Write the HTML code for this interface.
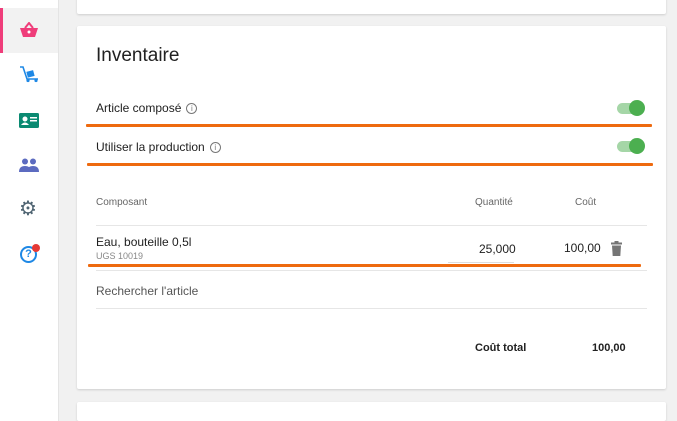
<!DOCTYPE html>
<html style="overflow:hidden;height:421px"><head><style>
body{margin:0;width:677px;height:421px;background:#f1f1f1;font-family:"Liberation Sans",sans-serif;position:relative;overflow:hidden}
.sb{position:absolute;left:0;top:0;width:58px;height:421px;background:#fff;border-right:1px solid #e4e4e4}
.card{position:absolute;left:77px;width:589px;background:#fff;box-shadow:0 1px 2px rgba(0,0,0,.15);border-radius:2px}
.t{position:absolute;color:#212121;font-size:12px;white-space:nowrap}
.ln{position:absolute;height:3px;background:#ee6a0f;border-radius:1px}
.hr{position:absolute;height:1px;background:#e6e6e6}
.tg{position:absolute;width:28px;height:12px}
.tg:before{content:"";position:absolute;left:0;top:1px;width:26px;height:11px;border-radius:6px;background:#a5d6a7}
.tg:after{content:"";position:absolute;right:0;top:-2px;width:16px;height:16px;border-radius:50%;background:#4caf50}
.i{display:inline-block;width:9px;height:9px;border:1px solid #777;border-radius:50%;font-size:8px;line-height:9px;text-align:center;color:#777;margin-left:5px;vertical-align:1px}
.h{font-size:10px;color:#666}
</style></head><body>
<div class="sb">
<div style="position:absolute;left:0;top:8px;width:58px;height:45px;background:#f2f2f2"></div>
<div style="position:absolute;left:0;top:8px;width:3px;height:45px;background:#ef3d7a"></div>
<svg style="position:absolute;left:19px;top:22px" width="20" height="16" viewBox="0 0 20 16"><path d="M6 6 L10 1 L14 6" stroke="#ef3d7a" stroke-width="2" fill="none"/><path d="M1 6 H19 L16 15 H4 Z" fill="#ef3d7a"/><circle cx="10" cy="10" r="1.5" fill="#fff"/></svg>
<svg style="position:absolute;left:19px;top:65px" width="20" height="18" viewBox="0 0 20 18"><path d="M1 2 H4 L8 14 H19" stroke="#1e88e5" stroke-width="1.6" fill="none"/><rect x="8" y="6" width="7" height="6" fill="#1e88e5" transform="rotate(-15 11 9)"/><circle cx="9" cy="15.5" r="1.6" fill="#1e88e5"/><circle cx="17" cy="15.5" r="1.6" fill="#1e88e5"/></svg>
<svg style="position:absolute;left:19px;top:113px" width="20" height="15" viewBox="0 0 20 15"><rect width="20" height="15" rx="1.5" fill="#0b8a72"/><circle cx="6" cy="6" r="2.5" fill="#fff"/><path d="M2 12 Q6 7 10 12Z" fill="#fff"/><rect x="11" y="4" width="7" height="1.5" fill="#fff"/><rect x="11" y="7" width="7" height="1.5" fill="#fff"/></svg>
<svg style="position:absolute;left:19px;top:158px" width="20" height="14" viewBox="0 0 20 14"><circle cx="6" cy="3.5" r="3" fill="#5c6bc0"/><circle cx="14" cy="3.5" r="3" fill="#5c6bc0"/><path d="M0 14 Q0 8 6 8 Q12 8 12 14Z M8 14 Q8 8 14 8 Q20 8 20 14Z" fill="#5c6bc0"/></svg>
<div style="position:absolute;left:19px;top:200px;width:18px;height:18px;color:#4e6371;font-size:20px;line-height:18px;text-align:center">⚙</div>
<div style="position:absolute;left:20px;top:246px;width:13px;height:13px;border:2px solid #1e88e5;border-radius:50%;color:#1e88e5;font-size:11px;font-weight:bold;line-height:13px;text-align:center">?</div>
<div style="position:absolute;left:32px;top:244px;width:8px;height:8px;border-radius:50%;background:#e53935"></div>
</div>
<div class="card" style="top:-4px;height:18px"></div>
<div class="card" style="top:26px;height:363px">
<div class="t" style="left:19px;top:19px;font-size:19px">Inventaire</div>
<div class="t" style="left:19px;top:75px">Article composé<span class="i">i</span></div>
<div class="tg" style="left:540px;top:76px"></div>
<div class="t" style="left:19px;top:114px">Utiliser la production<span class="i">i</span></div>
<div class="tg" style="left:540px;top:114px"></div>
<div class="t h" style="left:19px;top:171px">Composant</div>
<div class="t h" style="left:398px;top:171px">Quantité</div>
<div class="t h" style="left:498px;top:171px">Coût</div>
<div class="hr" style="left:19px;top:199px;width:551px"></div>
<div class="t" style="left:19px;top:209px">Eau, bouteille 0,5l</div>
<div class="t" style="left:19px;top:225px;font-size:9px;color:#888">UGS 10019</div>
<div class="t" style="left:402px;top:216px">25,000</div>
<div class="hr" style="left:371px;top:236px;width:66px;background:#ddd"></div>
<div class="t" style="left:487px;top:215px">100,00</div>
<svg style="position:absolute;left:534px;top:215px" width="11" height="15" viewBox="0 0 11 15"><rect x="0" y="1.5" width="11" height="2" fill="#757575"/><rect x="3.5" y="0" width="4" height="2" fill="#757575"/><path d="M1 4.5 H10 L9.3 15 H1.7Z" fill="#757575"/></svg>
<div class="hr" style="left:19px;top:244px;width:551px"></div>
<div class="t" style="left:19px;top:258px;color:#555">Rechercher l'article</div>
<div class="hr" style="left:19px;top:282px;width:551px"></div>
<div class="t" style="left:398px;top:316px;font-weight:bold;font-size:11px">Coût total</div>
<div class="t" style="left:515px;top:316px;font-weight:bold;font-size:11px">100,00</div>
</div>
<div class="card" style="top:402px;height:19px"></div>
<div class="ln" style="left:86px;top:124px;width:566px"></div>
<div class="ln" style="left:87px;top:163px;width:566px"></div>
<div class="ln" style="left:88px;top:264px;width:553px"></div>
</body></html>
